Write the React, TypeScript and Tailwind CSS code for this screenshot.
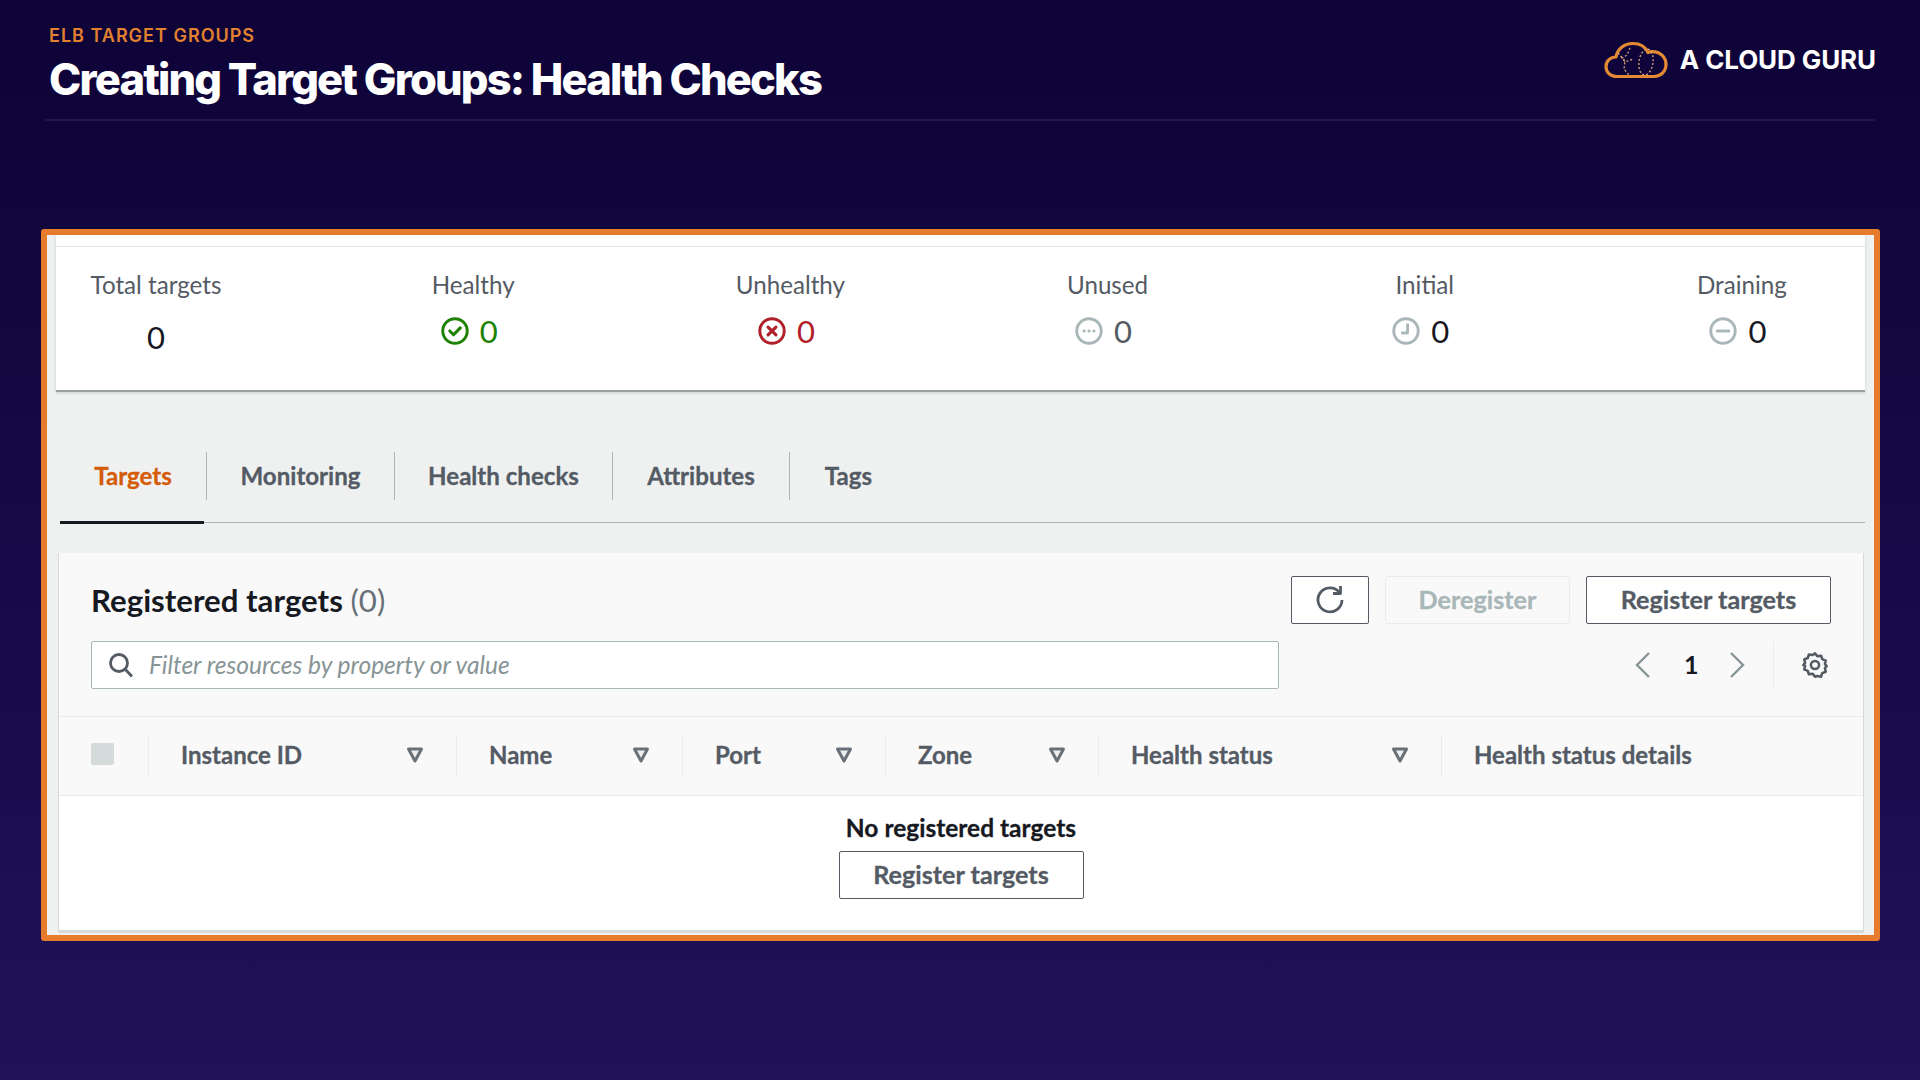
const F = "[font-family:Lato,'Liberation_Sans',sans-serif]";

function StatIcon({ kind }: { kind: "ok" | "bad" | "dots" | "clock" | "minus" }) {
  const color = kind === "ok" ? "#1d8102" : kind === "bad" ? "#b0202a" : "#aab7b8";
  return (
    <svg width="28" height="28" viewBox="0 0 27 27" fill="none" stroke={color} strokeWidth="2.8" strokeLinecap="round" strokeLinejoin="round">
      <circle cx="13.5" cy="13.5" r="11.8" />
      {kind === "ok" && <path d="M8.5 13.5l3.6 3.6 6.5-6.6" strokeWidth="3" />}
      {kind === "bad" && <path d="M9.7 9.7l7.6 7.6M17.3 9.7l-7.6 7.6" strokeWidth="3" />}
      {kind === "dots" && <path d="M8.800 13.5h.1M13.5 13.5h.1M18.2 13.5h.1" strokeWidth="3" />}
      {kind === "clock" && <path d="M15 7.5v8H10" />}
      {kind === "minus" && <path d="M8 13.5h11" strokeWidth="3" />}
    </svg>
  );
}

function Stat({ label, kind, color }: { label: string; kind?: "ok" | "bad" | "dots" | "clock" | "minus"; color: string }) {
  return (
    <div className="flex w-[200px] flex-col items-center">
      <div className="text-[24.2px] leading-[30px] text-[#545b64]">{label}</div>
      {kind ? (
        <div className="mt-[12px] flex h-[38px] items-center gap-[11px] pr-[8px] text-[31px] leading-[38px]" style={{ color }}>
          <StatIcon kind={kind} />
          <span>0</span>
        </div>
      ) : (
        <div className="mt-[18px] h-[38px] text-[31px] leading-[38px]" style={{ color }}>0</div>
      )}
    </div>
  );
}

function Tab({ label, active, w }: { label: string; active?: boolean; w: string }) {
  return (
    <div className={`relative flex h-[71px] items-start ${w}`}>
      <div className={`flex h-[48px] w-full items-center justify-center text-[24.1px] font-bold [-webkit-text-stroke:0.3px] ${active ? "text-[#d45b07]" : "border-l border-[#aab7b8] text-[#545b64]"}`}>{label}</div>
      {active && <div className="absolute bottom-[-1px] left-0 right-[2px] h-[3px] bg-[#16191f]" />}
    </div>
  );
}

function Filter() {
  return (
    <svg width="18" height="18" viewBox="0 0 18 18" fill="#eef0f0" stroke="#687078" strokeWidth="3" strokeLinejoin="round">
      <path d="M2.500 3h13L9 15z" />
    </svg>
  );
}

function Head({ label, w, filter = true }: { label: string; w: string; filter?: boolean }) {
  return (
    <div className={`flex h-[40px] items-center justify-between border-l border-[#eaeded] pb-[2px] pl-[32px] pr-[32px] text-[24px] font-bold text-[#545b64] [-webkit-text-stroke:0.3px] ${w}`}>
      <span>{label}</span>
      {filter && <Filter />}
    </div>
  );
}

function Btn({ children, w, disabled }: { children: React.ReactNode; w: string; disabled?: boolean }) {
  return (
    <div className={`flex h-[48px] items-center justify-center rounded-[2px] border text-[25.2px] font-bold [-webkit-text-stroke:0.3px] ${w} ${disabled ? "border-[#eaeded] text-[#aab7b8]" : "border-[#545b64] bg-white text-[#545b64]"}`}>
      {children}
    </div>
  );
}

function Logo() {
  return (
    <svg width="64" height="38" viewBox="0 0 64 38" fill="none">
      <path d="M13 35.500C6 35.500 2 31 2 25.500S6.500 16 12 16c1.500-8 8-13.500 17-13.500 7 0 12.500 3.500 15 9 1.500-.6 3-.9 4.500-.9C56.500 10.600 62 16.500 62 23.500S56.500 35.500 50 35.500H13z" stroke="#e48a33" strokeWidth="3.200" strokeLinejoin="round" />
      <path d="M14 12l7 8-1 8 5 6M26 7l-3 7-5 3 3 4 8-3" stroke="#d9a87a" strokeWidth="1.300" strokeDasharray="2 2" />
      <ellipse cx="42" cy="21" rx="7" ry="13" stroke="#d9a87a" strokeWidth="1.300" strokeDasharray="2 2" transform="rotate(8 42 21)" />
    </svg>
  );
}

export default function App() {
  return (
    <div className={`flex h-[1080px] w-[1920px] flex-col overflow-hidden bg-gradient-to-b from-[#0e0337] to-[#1f1258] ${F}`}>
      <header className="mx-[45px] flex h-[121px] items-start justify-between border-b-2 border-[#1f1850] pl-[4px]">
        <div className="pt-[25px] font-['Inter',sans-serif]">
          <div className="text-[18px] font-semibold leading-[22px] tracking-[1px] text-[#e2812f]">ELB TARGET GROUPS</div>
          <div className="mt-[7px] text-[43.5px] font-extrabold leading-[50px] tracking-[-1.85px] text-white">Creating Target Groups: Health Checks</div>
        </div>
        <div className="-mr-[1px] flex items-center gap-[12px] pt-[40px] font-['Inter',sans-serif]">
          <Logo />
          <span className="text-[26px] font-bold tracking-[-0.1px] text-white">A CLOUD GURU</span>
        </div>
      </header>

      <section className="ml-[41px] mt-[108px] flex h-[712px] w-[1839px] flex-col rounded-[3px] border-[6px] border-[#e57b2b] bg-[#eff1f1]">
        <div className="mx-[9px] h-[157px] border-b-2 border-[#9aa0a0] bg-white pt-[11px] shadow-[0_1px_3px_rgba(0,0,0,0.15)]">
          <div className="flex justify-between border-t border-[#e4e7e7] pr-[23px] pt-[23px]">
            <Stat label="Total targets" color="#16191f" />
            <Stat label="Healthy" kind="ok" color="#1d8102" />
            <Stat label="Unhealthy" kind="bad" color="#b0202a" />
            <Stat label="Unused" kind="dots" color="#545b64" />
            <Stat label="Initial" kind="clock" color="#16191f" />
            <Stat label="Draining" kind="minus" color="#16191f" />
          </div>
        </div>

        <div className="ml-[13px] mr-[9px] mt-[60px] flex h-[71px] border-b border-[#aab7b8]">
          <Tab label="Targets" active w="w-[146px]" />
          <Tab label="Monitoring" w="w-[188px]" />
          <Tab label="Health checks" w="w-[218px]" />
          <Tab label="Attributes" w="w-[177px]" />
          <Tab label="Tags" w="w-[118px]" />
        </div>

        <div className="mb-[2px] ml-[11px] mr-[10px] mt-[30px] flex flex-1 flex-col border-x border-b-[3px] border-[#d5dbdb] bg-white">
          <div className="bg-[#f9f9f9]">
            <div className="flex h-[88px] items-center justify-between pl-[32px] pr-[32px] pt-[6px]">
              <div className="text-[31.2px] font-bold text-[#16191f]">
                Registered targets <span className="font-normal text-[#687078]">(0)</span>
              </div>
              <div className="flex gap-[16px]">
                <Btn w="w-[78px]">
                  <svg width="32" height="32" viewBox="0 0 32 32" fill="none" stroke="#545b64" strokeWidth="2.800" strokeLinejoin="round">
                    <path d="M25.500 8.500A12 12 0 1 0 28 16" />
                    <path d="M26.500 2v7.500H19" />
                  </svg>
                </Btn>
                <Btn w="w-[185px]" disabled>Deregister</Btn>
                <Btn w="w-[245px]">Register targets</Btn>
              </div>
            </div>
            <div className="flex h-[75px] items-start pl-[32px] pr-[32px]">
              <div className="flex h-[48px] w-[1188px] items-center gap-[15px] rounded-[2px] border border-[#aab7b8] bg-white pl-[16px] text-[24.5px] italic text-[#879596]">
                <svg width="26" height="26" viewBox="0 0 26 26" fill="none" stroke="#545b64" strokeWidth="2.800">
                  <circle cx="11" cy="11" r="8.500" />
                  <path d="M17 17l7 7.500" />
                </svg>
                Filter resources by property or value
              </div>
              <div className="ml-auto flex h-[48px] items-center">
                <svg width="22" height="30" viewBox="0 0 22 30" fill="none" stroke="#879596" strokeWidth="2.400"><path d="M17 3L5 15l12 12" /></svg>
                <span className="mx-[30px] w-[12px] text-center text-[25px] font-bold text-[#16191f]">1</span>
                <svg width="22" height="30" viewBox="0 0 22 30" fill="none" stroke="#879596" strokeWidth="2.400"><path d="M5 3l12 12L5 27" /></svg>
                <div className="ml-[25px] flex h-[48px] w-[58px] items-center justify-end border-l border-[#eaeded] pr-[2px]">
                  <svg width="28" height="28" viewBox="0 0 24 24" fill="none" stroke="#545b64" strokeWidth="2.200" strokeLinejoin="round">
                    <path d="M12 2l2 2.500 3.200-.5 1 3 3 1.200-.7 3 1.500 1.800-1.500 1.800.7 3-3 1.200-1 3-3.200-.5L12 22l-2-2.500-3.200.5-1-3-3-1.200.7-3L2 12l1.500-1.800-.7-3 3-1.200 1-3 3.200.5z" />
                    <circle cx="12" cy="12" r="3.500" />
                  </svg>
                </div>
              </div>
            </div>
            <div className="flex h-[80px] items-center border-y border-[#eaeded]">
              <div className="flex h-[40px] w-[89px] items-center pb-[4px] pl-[32px]">
                <div className="h-[22px] w-[23px] rounded-[2px] bg-[#d5dbdb]" />
              </div>
              <Head label="Instance ID" w="w-[308px]" />
              <Head label="Name" w="w-[226px]" />
              <Head label="Port" w="w-[203px]" />
              <Head label="Zone" w="w-[213px]" />
              <Head label="Health status" w="w-[343px]" />
              <Head label="Health status details" w="flex-1" filter={false} />
            </div>
          </div>
          <div className="flex flex-col items-center pt-[17px]">
            <div className="text-[24.5px] font-bold leading-[30px] text-[#16191f] [-webkit-text-stroke:0.3px]">No registered targets</div>
            <div className="mt-[8px]"><Btn w="w-[245px]">Register targets</Btn></div>
          </div>
        </div>
      </section>
    </div>
  );
}
